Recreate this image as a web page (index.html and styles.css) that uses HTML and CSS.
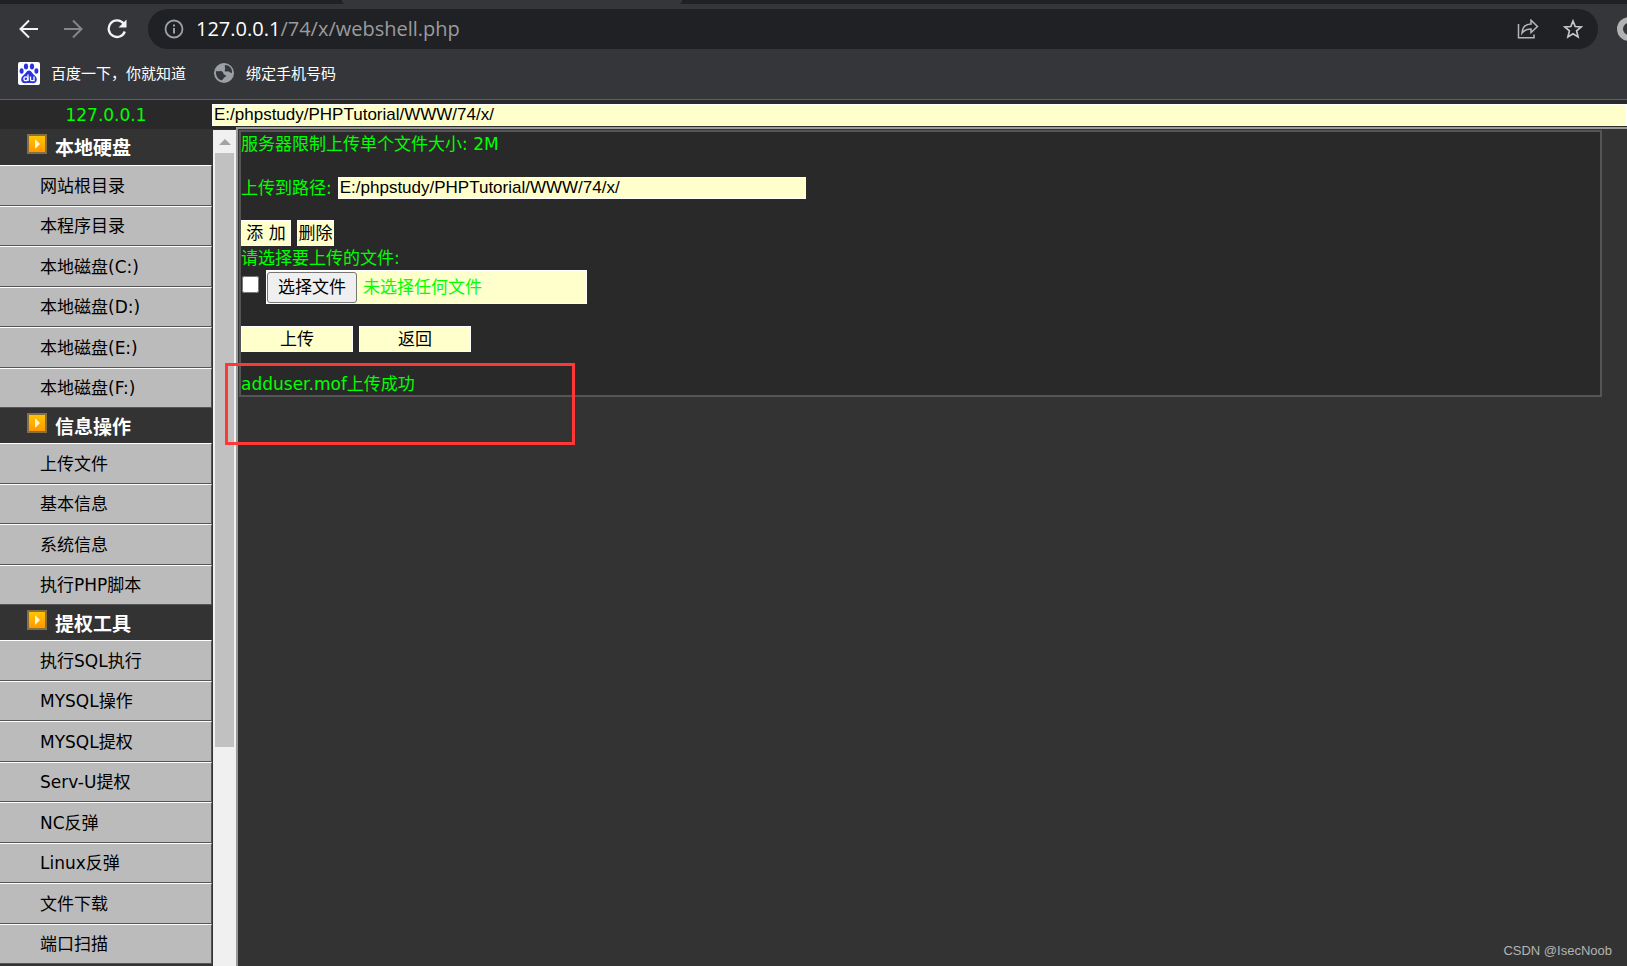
FILE: index.html
```html
<!DOCTYPE html>
<html lang="zh-CN">
<head>
<meta charset="utf-8">
<title>127.0.0.1/74/x/webshell.php</title>
<link rel="stylesheet" href="styles.css">
</head>
<body>
<header class="browser">
  <div class="tabs"><div class="tab-gap"></div></div>
  <div class="toolbar">
    <button class="nav" aria-label="后退"><svg width="20" height="20" viewBox="0 0 20 20" fill="none" stroke="#f1f3f4" stroke-width="2"><path d="M19 10H2M10 1.5L1.500 10L10 18.500"/></svg></button>
    <button class="nav" aria-label="前进"><svg width="20" height="20" viewBox="0 0 20 20" fill="none" stroke="#84868a" stroke-width="2"><path d="M1 10H18M10 1.500L18.500 10L10 18.500"/></svg></button>
    <button class="nav" aria-label="刷新"><svg width="20" height="20" viewBox="0 0 20 20"><path d="M16.500 4.500A8.300 8.300 0 1 0 17.800 12.500" fill="none" stroke="#f1f3f4" stroke-width="2.300"/><path d="M19.500 0.500V8.500H11.500Z" fill="#f1f3f4"/></svg></button>
    <div class="address">
      <svg width="20" height="20" viewBox="0 0 20 20"><circle cx="10" cy="10" r="8.500" fill="none" stroke="#9aa0a6" stroke-width="1.800"/><path d="M9 9h2v5.500H9zM9 5.500h2v2H9z" fill="#9aa0a6"/></svg>
      <span class="url"><b>127.0.0.1</b>/74/x/webshell.php</span>
      <button class="nav" aria-label="分享"><svg width="22" height="20" viewBox="0 0 22 20" fill="none" stroke="#b4b6b9" stroke-width="1.500"><path d="M1.500 5V18.700H17V15.500"/><path d="M5 14C5.500 8 8.500 5 14 5V1.200L20.500 7.500L14 13.500V10C9.500 10 7 11.200 5 14Z"/></svg></button>
      <button class="nav" aria-label="收藏"><svg width="20" height="20" viewBox="0 0 20 20" fill="none" stroke="#c6c8ca" stroke-width="1.700"><path d="M10 2L12.200 7.500L18.200 8L13.600 11.900L15.100 17.900L10 14.700L4.900 17.900L6.400 11.900L1.800 8L7.800 7.500Z"/></svg></button>
    </div>
    <div class="extension"></div>
  </div>
  <nav class="bookmarks">
    <a href="#"><svg width="22" height="23" viewBox="0 0 22 23"><rect width="22" height="23" rx="2" fill="#fff"/><g fill="#2932e1"><ellipse cx="8" cy="4.500" rx="2.100" ry="3"/><ellipse cx="14" cy="4.500" rx="2.100" ry="3"/><ellipse cx="3.600" cy="9" rx="2" ry="2.800"/><ellipse cx="18.400" cy="9" rx="2" ry="2.800"/><path d="M11 8.500C8.500 8.500 8 11.500 5.500 13.300C1.500 16.500 3.300 21.500 7 21.300C9.500 21 12.500 21 15 21.300C18.800 21.500 20.500 16.500 16.500 13.300C14 11.500 13.500 8.500 11 8.500Z"/></g><g fill="none" stroke="#fff" stroke-width="1.300"><circle cx="7.800" cy="16.700" r="1.900"/><path d="M10 12.500V19M12.500 14.500V17.500Q12.500 18.700 14 18.700H16V14.500"/></g></svg>百度一下，你就知道</a>
    <a href="#"><svg width="22" height="22" viewBox="0 0 22 22"><circle cx="11" cy="11" r="10" fill="#9aa0a6"/><path d="M3 9C6 10 7 8 9 9.500C11 11 10 12.500 12 13C14 13.500 13 15 11 15.500C10.500 17 9 19 7.500 18C5 17 2.500 14 3 9ZM12 3C11 5 13 6 12 7.500C11 8.500 12 10 14 9.500C16 8.500 16.500 11 19 11C19.500 6 16 3 12 3Z" fill="#35363a"/></svg>绑定手机号码</a>
  </nav>
</header>
<div class="topbar">
  <label class="host" for="path">127.0.0.1</label>
  <input class="field path" id="path" type="text" value="E:/phpstudy/PHPTutorial/WWW/74/x/">
</div>
<div class="frames">
  <nav class="sidebar">
    <h2><i class="bullet"></i>本地硬盘</h2>
    <ul>
      <li><a href="#">网站根目录</a></li>
      <li><a href="#">本程序目录</a></li>
      <li><a href="#">本地磁盘(C:)</a></li>
      <li><a href="#">本地磁盘(D:)</a></li>
      <li><a href="#">本地磁盘(E:)</a></li>
      <li><a href="#">本地磁盘(F:)</a></li>
    </ul>
    <h2><i class="bullet"></i>信息操作</h2>
    <ul>
      <li><a href="#">上传文件</a></li>
      <li><a href="#">基本信息</a></li>
      <li><a href="#">系统信息</a></li>
      <li><a href="#">执行PHP脚本</a></li>
    </ul>
    <h2><i class="bullet"></i>提权工具</h2>
    <ul>
      <li><a href="#">执行SQL执行</a></li>
      <li><a href="#">MYSQL操作</a></li>
      <li><a href="#">MYSQL提权</a></li>
      <li><a href="#">Serv-U提权</a></li>
      <li><a href="#">NC反弹</a></li>
      <li><a href="#">Linux反弹</a></li>
      <li><a href="#">文件下载</a></li>
      <li><a href="#">端口扫描</a></li>
    </ul>
  </nav>
  <div class="scrollbar"><div class="arrow"></div><div class="thumb"></div></div>
  <main class="content">
    <form class="panel">
      <p class="line">服务器限制上传单个文件大小: 2M</p>
      <div class="row target"><label for="target">上传到路径:</label><input class="field" id="target" type="text" value="E:/phpstudy/PHPTutorial/WWW/74/x/"></div>
      <div class="row"><button class="btn add" type="button">添 加</button><button class="btn remove" type="button">删除</button></div>
      <p class="line">请选择要上传的文件:</p>
      <div class="row files">
        <input class="check" type="checkbox" aria-label="选择此行">
        <label class="file"><input type="file"><span class="pick">选择文件</span><span>未选择任何文件</span></label>
      </div>
      <div class="row actions"><button class="btn wide" type="button">上传</button><button class="btn wide" type="button">返回</button></div>
      <p class="status">adduser.mof上传成功</p>
    </form>
    <div class="highlight"></div>
    <div class="watermark">CSDN @IsecNoob</div>
  </main>
</div>
</body>
</html>
```
FILE: styles.css
```css
* { box-sizing: border-box; }
body {
  margin: 0;
  height: 100vh;
  display: flex;
  flex-direction: column;
  overflow: hidden;
  background: #333;
  color: #0f0;
  font: 17px/24px "DejaVu Sans", "Noto Sans CJK SC", sans-serif;
}
h2, p, ul { margin: 0; padding: 0; }
ul { list-style: none; }
a { color: inherit; text-decoration: none; }
svg { display: block; flex: none; }
button, input { font: inherit; margin: 0; }

.browser { flex: none; background: #35363a; border-bottom: 1px solid #606164; }
.tabs { height: 4px; background: #202124; }
.tab-gap { height: 4px; margin-left: 342px; width: 340px; background: #35363a; border-radius: 0 0 8px 8px; }
.toolbar { display: flex; align-items: center; height: 50px; padding: 0 0 0 19px; overflow: hidden; }
.nav { display: block; padding: 0; border: 0; background: none; margin-right: 24px; flex: none; }
.toolbar > .nav:nth-child(3) { margin-right: 21px; }
.address {
  flex: 1;
  display: flex;
  align-items: center;
  height: 40px;
  padding-left: 16px;
  border-radius: 20px;
  background: #202124;
}
.address .nav:last-child { margin-right: 15px; }
.url { flex: 1; margin-left: 12px; color: #9a9b9d; font: 20px/28px "Open Sans", sans-serif; }
.url b { color: #fff; font-weight: 400; }
.extension { flex: none; width: 24px; height: 24px; margin: 0 -14px 0 19px; border: 6px solid #b2b2b2; border-radius: 50%; background: #35363a; }
.bookmarks { display: flex; gap: 27px; height: 45px; padding: 0 18px 7px; align-items: center; }
.bookmarks a { display: flex; align-items: center; gap: 11px; color: #fff; font: 15px/22px "Noto Sans CJK SC", sans-serif; }

.topbar { flex: none; display: flex; align-items: center; height: 29px; padding-top: 1px; background: #292929; }
.host { width: 212px; text-align: center; }
.field {
  height: 22px;
  padding: 0 1px;
  border: 1px solid #fff;
  border-radius: 0;
  background: #ffc;
  color: #000;
  font: 17px/20px "Liberation Sans", sans-serif;
}
.path { flex: 1; min-width: 0; }

.frames { flex: 1; min-height: 0; display: flex; }
.sidebar { flex: none; width: 213px; overflow: hidden; border-right: 1px solid #333; }
.sidebar h2 { display: flex; gap: 8px; height: 36px; padding: 5px 0 0 27px; color: #fff; font-size: 19px; line-height: 28px; }
.sidebar ul + h2 { height: 35px; }
.bullet { position: relative; width: 20px; height: 20px; border: 2px solid #857043; background: linear-gradient(#ffc400, #ff9800); }
.bullet::after { content: ""; position: absolute; left: 6px; top: 3px; border: solid transparent; border-width: 5px 0 5px 5px; border-left-color: #fff5cf; }
.sidebar a {
  display: flex;
  align-items: center;
  height: 41px;
  padding-left: 40px;
  border: solid #555;
  border-width: 1px 1px 1px 0;
  border-top-color: #fff;
  background: #bbb;
  color: #000;
}
.sidebar li:nth-child(even) a { height: 40px; }
.scrollbar { flex: none; width: 23px; padding: 0 2px; margin-top: 1px; background: #f0f0f0; }
.arrow { height: 23px; padding: 9px 4px; }
.arrow::before { content: ""; display: block; width: 0; border: solid transparent; border-width: 0 6px 6px; border-bottom-color: #a3a3a3; }
.thumb { height: 71%; background: #c1c1c1; }
.content { position: relative; flex: 1; min-width: 0; border-left: 2px solid #999; border-top: 2px solid #999; margin-top: -2px; padding: 1px 25px 0 1px; }
.panel { border: 2px solid #555; background: #292929; }
.row { display: flex; gap: 6px; }
.target { margin: 21px 0; align-items: center; height: 22px; }
.target .field { width: 468px; }
.btn { height: 26px; padding: 0; border: 1px solid #fff; border-radius: 0; background: #ffc; color: #000; white-space: nowrap; }
.add { width: 50px; }
.remove { width: 37px; }
.wide { width: 112px; }
.check { width: 17px; height: 17px; margin: 6px 0 0 1px; }
.files { gap: 7px; }
.file { position: relative; display: flex; align-items: center; gap: 6px; width: 321px; height: 34px; border: 1px solid #fff; background: #ffc; }
.file input { position: absolute; inset: 0; width: 100%; opacity: 0; }
.pick { width: 90px; height: 31px; border: 1px solid #767676; border-radius: 3px; background: #efefef; color: #000; text-align: center; line-height: 29px; }
.actions { margin: 22px 0 21px; }
.status { line-height: 22px; }
.highlight { position: absolute; left: -13px; top: 234px; width: 350px; height: 82px; border: 3px solid #ff3737; }
.watermark { position: absolute; right: 15px; bottom: 5px; color: #b4b4b4; font: 13px/20px "Liberation Sans", sans-serif; }
```
